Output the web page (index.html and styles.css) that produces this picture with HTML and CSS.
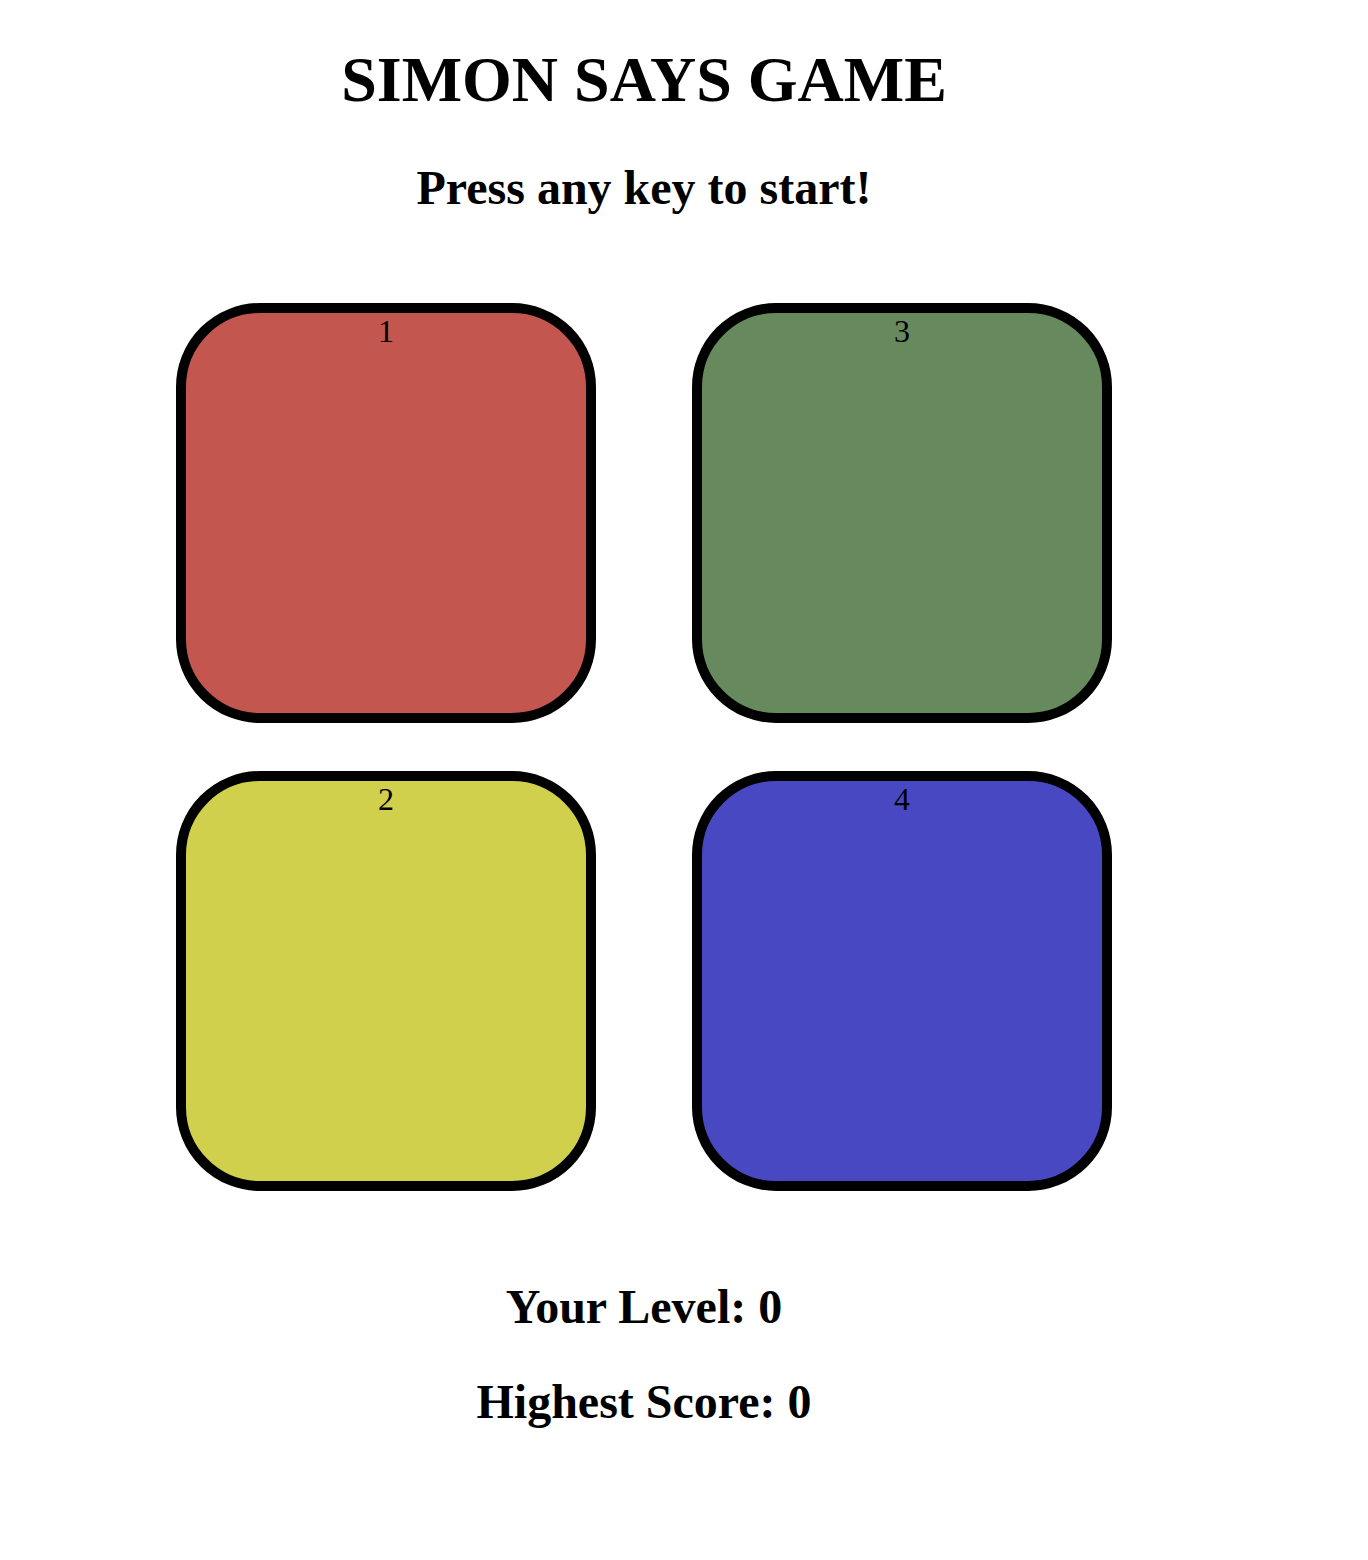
FILE: index.html
```html
<!DOCTYPE html>
<html lang="en">
<head>
<meta charset="utf-8">
<title>Simon Says Game</title>
<link rel="stylesheet" href="styles.css">
</head>
<body>
  <h1 class="title">SIMON SAYS GAME</h1>
  <h2 class="status">Press any key to start!</h2>
  <div class="board">
    <div class="pad pad-red">1</div>
    <div class="pad pad-green">3</div>
    <div class="pad pad-yellow">2</div>
    <div class="pad pad-blue">4</div>
  </div>
  <h2 class="score">Your Level: 0</h2>
  <h2 class="score">Highest Score: 0</h2>
</body>
</html>
```
FILE: styles.css
```css
html {
  background: #ffffff;
}
body {
  margin: 0 16px 16px;
  width: 1256px;
  font-family: "Liberation Serif", "Times New Roman", serif;
  font-size: 32px;
  color: #000000;
  text-align: center;
}
.title {
  font-size: 64px;
  font-weight: bold;
  margin: 42.88px 0;
  line-height: normal;
}
.status,
.score {
  font-size: 48px;
  font-weight: bold;
  margin: 39.84px 0;
  line-height: normal;
}
.board {
  display: grid;
  grid-template-columns: 420px 420px;
  grid-auto-rows: 420px;
  column-gap: 96px;
  row-gap: 48px;
  justify-content: center;
  margin: 88px 0;
}
.pad {
  box-sizing: border-box;
  border: 10px solid #000000;
  border-radius: 20%;
  font-size: 32px;
  line-height: normal;
  text-align: center;
}
.pad-red { background: #c3574f; }
.pad-green { background: #66895d; }
.pad-yellow { background: #d0d04d; }
.pad-blue { background: #4849c2; }
```
